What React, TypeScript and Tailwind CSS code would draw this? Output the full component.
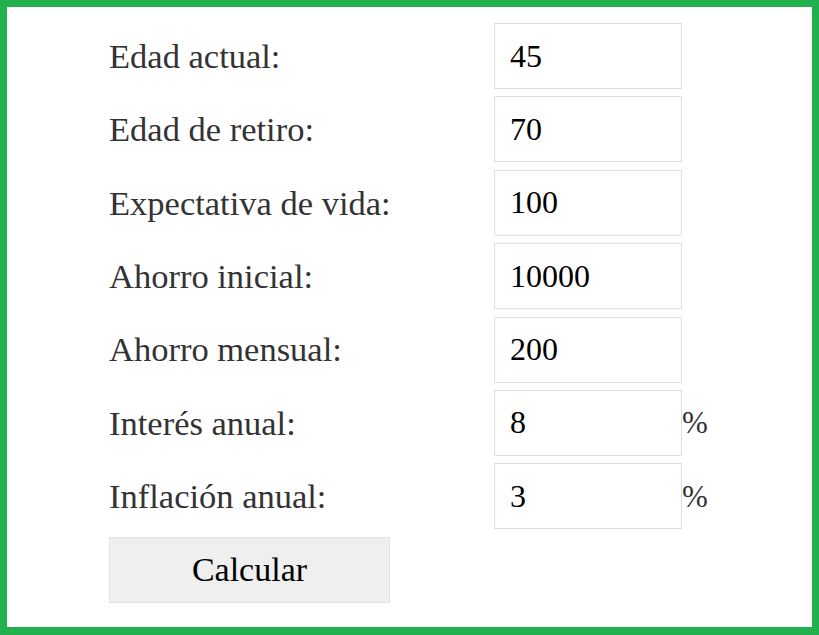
const fields = [
  { label: "Edad actual:", value: "45" },
  { label: "Edad de retiro:", value: "70" },
  { label: "Expectativa de vida:", value: "100" },
  { label: "Ahorro inicial:", value: "10000" },
  { label: "Ahorro mensual:", value: "200" },
  { label: "Interés anual:", value: "8", pct: true },
  { label: "Inflación anual:", value: "3", pct: true },
];

const App = () => {
  return (
    <div className="w-[819px] h-[635px] bg-white border-[#22b14c] border-x-[7px] border-t-[7px] border-b-[8px] font-['Liberation_Serif',serif]">
      <form
        className="pl-[102px] pt-[16px] flex flex-col gap-[7.4px]"
        onSubmit={(e) => e.preventDefault()}
      >
        {fields.map((f) => (
          <div key={f.label} className="flex items-center h-[66px]">
            <label className="w-[385px] text-[34.5px] text-[#333333] leading-none">
              {f.label}
            </label>
            <input
              type="text"
              defaultValue={f.value}
              className="w-[188px] h-full border border-[#e0e0e0] pl-[15px] font-['Liberation_Serif',serif] text-[32px] text-black outline-none"
            />
            {f.pct && (
              <span className="text-[31px] text-[#333333] leading-none">%</span>
            )}
          </div>
        ))}
        <button
          type="submit"
          className="w-[281px] h-[66px] bg-[#efefef] border border-[#e0e0e0] font-['Liberation_Serif',serif] text-[34px] text-black"
        >
          Calcular
        </button>
      </form>
    </div>
  );
};

export default App;
